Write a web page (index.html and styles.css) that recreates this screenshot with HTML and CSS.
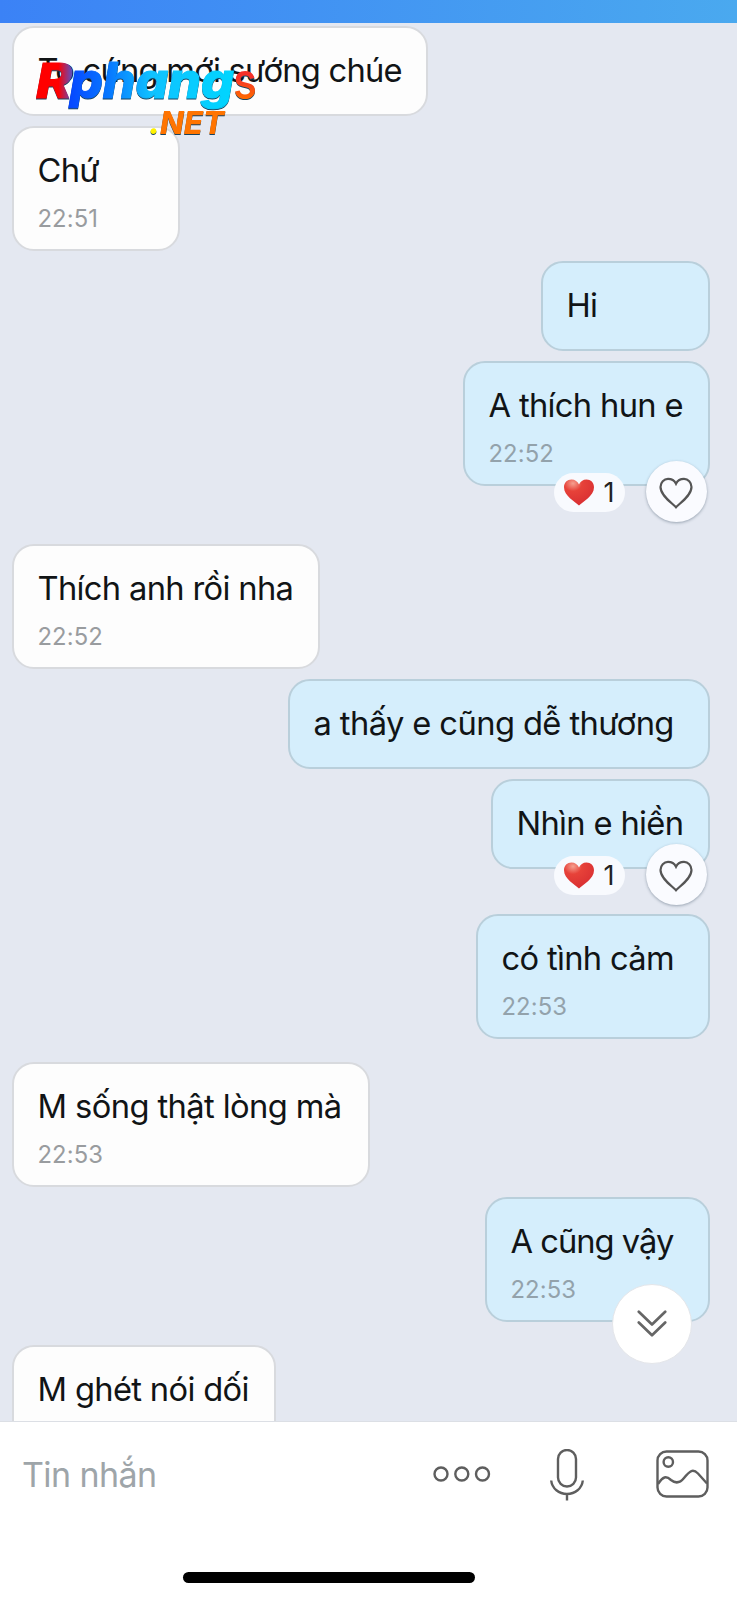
FILE: index.html
```
<!DOCTYPE html>
<html lang="vi">
<head>
<meta charset="utf-8">
<title>Tin nhắn</title>
<link rel="stylesheet" href="styles.css">
</head>
<body>
<div class="phone">
  <header class="topbar"></header>
  <main class="chat">
    <div class="msg in" style="width:416px"><p class="text long">To cứng mới sướng chúe</p></div>
    <div class="msg in" style="width:168px"><p class="text">Chứ</p><time class="time">22:51</time></div>
    <div class="msg out" style="width:169px"><p class="text">Hi</p></div>
    <div class="msg out reacted" style="width:247px"><p class="text">A thích hun e</p><time class="time">22:52</time>
      <div class="reactions">
        <span class="pill"><svg class="heart" viewBox="0 0 30 27"><use href="#redheart"/></svg><span class="count">1</span></span>
        <span class="like"><svg class="outline" viewBox="0 0 34 32"><path d="M17 30.300C13 26 1.500 18.500 1.500 10C1.500 5.200 5 1.900 9 1.900C12.600 1.900 15.500 3.700 17 6.700C18.500 3.700 21.400 1.900 25 1.900C29 1.900 32.500 5.200 32.500 10C32.500 18.500 21 26 17 30.300Z"/></svg></span>
      </div>
    </div>
    <div class="msg in" style="width:308px"><p class="text">Thích anh rồi nha</p><time class="time">22:52</time></div>
    <div class="msg out" style="width:422px"><p class="text wide">a thấy e cũng dễ thương</p></div>
    <div class="msg out reacted-short" style="width:219px"><p class="text">Nhìn e hiền</p>
      <div class="reactions">
        <span class="pill"><svg class="heart" viewBox="0 0 30 27"><use href="#redheart"/></svg><span class="count">1</span></span>
        <span class="like"><svg class="outline" viewBox="0 0 34 32"><path d="M17 30.300C13 26 1.500 18.500 1.500 10C1.500 5.200 5 1.900 9 1.900C12.600 1.900 15.500 3.700 17 6.700C18.500 3.700 21.400 1.900 25 1.900C29 1.900 32.500 5.200 32.500 10C32.500 18.500 21 26 17 30.300Z"/></svg></span>
      </div>
    </div>
    <div class="msg out last" style="width:234px"><p class="text">có tình cảm</p><time class="time">22:53</time></div>
    <div class="msg in" style="width:358px"><p class="text wide">M sống thật lòng mà</p><time class="time">22:53</time></div>
    <div class="msg out last" style="width:225px"><p class="text tight">A cũng vậy</p><time class="time">22:53</time></div>
    <div class="msg in cut" style="width:264px"><p class="text">M ghét nói dối</p></div>
    <button class="jump" aria-label="Xuống cuối"><svg viewBox="0 0 30 28"><path d="M1.800 1.800L15 14.500L28.200 1.800M1.800 12.500L15 25.300L28.200 12.500"/></svg></button>
  </main>
  <footer class="composer">
    <div class="row">
      <span class="placeholder">Tin nhắn</span>
      <svg class="dots" viewBox="0 0 58 16"><circle cx="8" cy="8" r="6.500"/><circle cx="28.800" cy="8" r="6.500"/><circle cx="49.500" cy="8" r="6.500"/></svg>
      <svg class="mic" viewBox="0 0 34 52"><rect x="8" y="1" width="18" height="36.500" rx="9"/><path d="M1.200 31.500C2 39.500 9 45 17 45S32 39.500 32.800 31.500M17 45V51.500"/></svg>
      <svg class="image" viewBox="0 0 53 48"><rect x="1.500" y="1.500" width="50" height="45" rx="9"/><circle cx="12.300" cy="12" r="4.700"/><path d="M2 34C7 26.500 10 25.500 15 30C20 34 24 33 28 28C34 20.500 37 18.500 42 23.500L51 33.500"/></svg>
    </div>
    <div class="home"></div>
  </footer>
  <svg class="brand" viewBox="0 0 230 90">
    <defs>
      <linearGradient id="g-r" gradientUnits="userSpaceOnUse" x1="8" y1="0" x2="42" y2="0"><stop offset=".6" stop-color="#f00"/><stop offset="1" stop-color="#5e4fc0"/></linearGradient>
      <linearGradient id="g-p" gradientUnits="userSpaceOnUse" x1="40" y1="0" x2="203" y2="0"><stop offset="0" stop-color="#0648ff"/><stop offset=".25" stop-color="#087bff"/><stop offset=".5" stop-color="#10c2ff"/><stop offset="1" stop-color="#00d5ff"/></linearGradient>
      <linearGradient id="g-s" x1="0" y1="0" x2="0" y2="1"><stop offset=".45" stop-color="#f5302a"/><stop offset=".8" stop-color="#ff6a00"/></linearGradient>
      <radialGradient id="g-h" cx=".3" cy=".15" r=".85"><stop offset="0" stop-color="#f5a090"/><stop offset=".35" stop-color="#e74239"/><stop offset="1" stop-color="#d92f32"/></radialGradient>
      <path id="redheart" fill="url(#g-h)" stroke="none" d="M15 26.500C11 22.500 0 17 0 8.200C0 3.500 3.300.5 7.500.5C11 .5 13.800 2.500 15 5.500C16.200 2.500 19 .5 22.500.5C26.700.5 30 3.500 30 8.200C30 17 19 22.500 15 26.500Z"/>
    </defs>
    <text class="b-main" x="6" y="47.500" textLength="36" lengthAdjust="spacingAndGlyphs" font-size="48" fill="url(#g-r)" stroke="url(#g-r)">R</text>
    <text class="b-main" x="40" y="47.500" textLength="164" lengthAdjust="spacingAndGlyphs" font-size="49" fill="url(#g-p)" stroke="url(#g-p)">phang</text>
    <text class="b-s" x="203" y="48.500" textLength="24" lengthAdjust="spacingAndGlyphs" font-size="52" fill="url(#g-s)">s</text>
    <text class="b-net" x="119" y="84" font-size="31" textLength="75" lengthAdjust="spacingAndGlyphs" fill="#ff7400"><tspan fill="#fff200">.</tspan>NET</text>
  </svg>
</div>
</body>
</html>
```

FILE: styles.css
```
* { box-sizing: border-box; }
body { margin: 0; font-family: Inter, "Liberation Sans", sans-serif; }
.phone { position: relative; display: flex; flex-direction: column; width: 737px; height: 1600px; overflow: hidden; background: #fff; }
.topbar { flex: none; height: 23px; background: linear-gradient(90deg, #3b82f6, #4aa9ef); }
.chat { position: relative; flex: none; display: flex; flex-direction: column; align-items: flex-start; height: 1399px; padding: 2.500px 27px 0 12px; overflow: hidden; background: #e4e8f1; border-bottom: 1px solid #dcdfe5; }
.msg { position: relative; flex: none; height: 90.500px; margin-bottom: 9.700px; padding: 23px 0 0 23.500px; border: 2px solid #d8dade; border-radius: 22px; background: #fdfdfd; }
.msg:has(.time) { height: 125.300px; }
.msg.out { align-self: flex-end; background: #d5eefc; border-color: #b9cfdb; }
.msg.reacted { margin-bottom: 57.500px; }
.msg.reacted-short { margin-bottom: 44.700px; }
.msg.last { margin-bottom: 22.500px; }
.msg.cut { height: 125px; }
.text { margin: 0; font-size: 32.700px; line-height: 38px; letter-spacing: -0.67px; color: #111416; white-space: nowrap; }
.text.long { letter-spacing: -0.75px; }
.text.wide { letter-spacing: -0.6px; }
.text.tight { letter-spacing: -1px; }
.time { display: block; margin-top: 15px; font-size: 23.800px; line-height: 30px; letter-spacing: 0.1px; color: #999c9f; }
.out .time { color: #93a2ab; }
.reactions { position: absolute; right: 1.500px; bottom: -38px; display: flex; align-items: center; gap: 21px; }
.pill { display: flex; align-items: center; gap: 10px; width: 71px; height: 39px; padding: 0 10px; margin-top: 2px; border-radius: 20px; background: #f8fafe; }
.heart { flex: none; width: 30px; height: 27px; }
.count { font-size: 27px; color: #222; }
.like { display: flex; align-items: center; justify-content: center; width: 61px; height: 61px; border-radius: 50%; background: #fafbff; box-shadow: 0 1px 3px rgba(60, 80, 100, .45); }
.outline { width: 34px; height: 32px; margin-top: 2px; fill: none; stroke: #555; stroke-width: 2.200; }
.jump { position: absolute; left: 612px; top: 1261px; display: flex; align-items: center; justify-content: center; width: 80px; height: 80px; padding: 0; border: 1px solid #e4e6ea; border-radius: 50%; background: #fff; }
.jump svg { width: 30px; height: 28px; fill: none; stroke: #666; stroke-width: 2.700; stroke-linecap: round; stroke-linejoin: round; }
.composer { display: flex; flex-direction: column; flex: 1; padding: 25px 28px 17px 22px; }
.row { display: flex; align-items: center; height: 54px; }
.row svg { flex: none; fill: none; stroke: #5e5e5e; stroke-width: 2.400; }
.placeholder { flex: 1; font-size: 34px; letter-spacing: -0.6px; color: #9ea5a9; }
.dots { width: 58px; height: 16px; }
.row .mic { width: 34px; height: 52px; margin: 2px 72px 0 59px; }
.image { width: 53px; height: 48px; }
.home { width: 292px; height: 11px; margin: auto 0 0 160.500px; border-radius: 6px; background: #000; }
.brand { position: absolute; left: 30px; top: 50px; width: 230px; height: 90px; overflow: visible; filter: drop-shadow(0 1.500px 0 #18435f); }
.b-main { font-family: Inter, sans-serif; font-weight: 800; font-style: italic; stroke-width: 1; stroke-linejoin: miter; }
.b-s { font-family: Inter, sans-serif; font-weight: 500; font-style: normal; }
.b-net { font-family: Inter, sans-serif; font-weight: 800; font-style: italic; }
```
